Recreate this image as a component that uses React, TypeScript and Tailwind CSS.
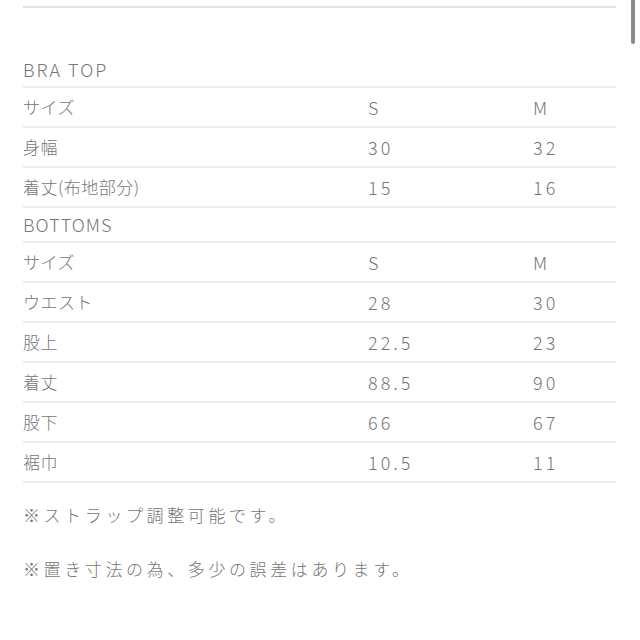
const FONT = "font-['Noto_Sans_CJK_JP','Noto_Sans',sans-serif]";

type Row = { label: string; s: string; m: string };

const BRA: Row[] = [
  { label: "サイズ", s: "S", m: "M" },
  { label: "身幅", s: "30", m: "32" },
  { label: "着丈(布地部分)", s: "15", m: "16" },
];

const BOTTOMS: Row[] = [
  { label: "サイズ", s: "S", m: "M" },
  { label: "ウエスト", s: "28", m: "30" },
  { label: "股上", s: "22.5", m: "23" },
  { label: "着丈", s: "88.5", m: "90" },
  { label: "股下", s: "66", m: "67" },
  { label: "裾巾", s: "10.5", m: "11" },
];

function Heading({ children, wide }: { children: string; wide?: boolean }) {
  return (
    <div
      className={`h-[35px] flex items-center border-b-2 border-[#ededed] text-[18px] font-light ${
        wide ? "tracking-[2px]" : "tracking-[1px]"
      }`}
    >
      {children}
    </div>
  );
}

function SizeRow({ r }: { r: Row }) {
  return (
    <div className="h-[40px] grid grid-cols-[345px_165px_1fr] items-center border-b-2 border-[#ededed]">
      <span className="text-[17px] font-light tracking-[0.5px]">{r.label}</span>
      <span className="text-[18px] font-light tracking-[3px]">{r.s}</span>
      <span className="text-[18px] font-light tracking-[3px]">{r.m}</span>
    </div>
  );
}

export default function App() {
  return (
    <div className={`relative w-[640px] h-[640px] bg-white overflow-hidden text-[#767676] ${FONT}`}>
      <div className="absolute right-[5px] top-0 w-[4px] h-[44px] rounded-b-full bg-[#8a8a8a]" />

      <div className="ml-[23px] w-[593px] pt-[6px]">
        <div className="border-t-2 border-[#e2e2e2]" />
        <div className="h-[45px]" />

        <Heading wide>BRA TOP</Heading>
        {BRA.map((r) => (
          <SizeRow key={r.label} r={r} />
        ))}

        <Heading>BOTTOMS</Heading>
        {BOTTOMS.map((r) => (
          <SizeRow key={r.label + r.s} r={r} />
        ))}

        <p className="mt-[20px] text-[17px] font-light tracking-[3.6px] leading-[24px]">※ストラップ調整可能です。</p>
        <p className="mt-[30px] text-[17px] font-light tracking-[3.6px] leading-[24px]">※置き寸法の為、多少の誤差はあります。</p>
      </div>
    </div>
  );
}
